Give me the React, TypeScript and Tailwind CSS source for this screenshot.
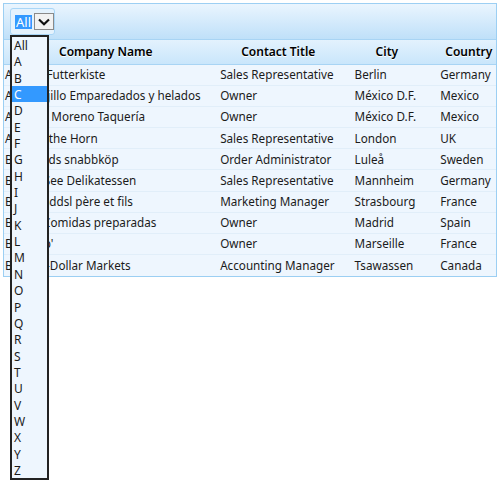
import React from "react";

const rows = [
  ["Alfreds Futterkiste", "Sales Representative", "Berlin", "Germany"],
  ["Ana Trujillo Emparedados y helados", "Owner", "México D.F.", "Mexico"],
  ["Antonio Moreno Taquería", "Owner", "México D.F.", "Mexico"],
  ["Around the Horn", "Sales Representative", "London", "UK"],
  ["Berglunds snabbköp", "Order Administrator", "Luleå", "Sweden"],
  ["Blauer See Delikatessen", "Sales Representative", "Mannheim", "Germany"],
  ["Blondesddsl père et fils", "Marketing Manager", "Strasbourg", "France"],
  ["Bólido Comidas preparadas", "Owner", "Madrid", "Spain"],
  ["Bon app'", "Owner", "Marseille", "France"],
  ["Bottom-Dollar Markets", "Accounting Manager", "Tsawassen", "Canada"],
];

const letters = ["All", ..."ABCDEFGHIJKLMNOPQRSTUVWXYZ".split("")];

export default function App() {
  return (
    <div className="relative w-[504px] h-[482px] bg-white font-['Noto_Sans',sans-serif] text-[11.7px] text-[#1b1b1b] pt-[3px] pl-[3px]">
      {/* Grid */}
      <div className="w-[494px] border border-[#9ccff3] bg-[#eef6fe]">
        {/* Toolbar */}
        <div className="h-[35px] pl-[6px] pt-[4px] bg-gradient-to-b from-[#eaf5fe] to-[#bfe0f9]">
          <div className="w-[45px] h-[27px] rounded-[3px] border border-[#a9d6f7] bg-[#e4f2fd] flex items-center pl-[4px] gap-[2px]">
            <span className="bg-[#3399ff] text-white text-[13px] leading-[14px] h-[14px] px-[1px] flex items-center">All</span>
            <span className="w-[20px] h-[17px] border border-[#8a8a8a] bg-[#f2f2f2] flex items-center justify-center">
              <svg width="12" height="8" viewBox="0 0 12 8">
                <path d="M1 1.5 L6 6.2 L11 1.5" fill="none" stroke="#111" strokeWidth="2.2" />
              </svg>
            </span>
          </div>
        </div>
        {/* Header */}
        <div className="h-[26px] pb-[1px] flex items-center border-t border-b border-[#a8d4f4] bg-gradient-to-b from-[#e3f2fd] to-[#c9e6fb] font-semibold text-[12px] text-black [text-shadow:0_1px_0_#fff]">
          <div className="w-[213px] pl-[55px]">Company Name</div>
          <div className="w-[135px] pl-[25px]">Contact Title</div>
          <div className="w-[86px] pl-[25px]">City</div>
          <div className="w-[60px] pl-[9px]">Country</div>
        </div>
        {/* Rows */}
        {rows.map((r, i) => (
          <div key={i} className={`h-[21.1px] flex items-center whitespace-nowrap ${i < rows.length - 1 ? "border-b border-[#e1eef9]" : ""}`}>
            <div className="w-[213px] pl-[1px] overflow-hidden">{r[0]}</div>
            <div className="w-[135px] pl-[4px] overflow-hidden">{r[1]}</div>
            <div className="w-[86px] pl-[4px] overflow-hidden">{r[2]}</div>
            <div className="w-[60px] pl-[4px] overflow-hidden">{r[3]}</div>
          </div>
        ))}
      </div>

      {/* Dropdown list */}
      <div className="absolute left-[10px] top-[35px] w-[39px] border-2 border-[#222] bg-[#eef6fe] text-[12px]">
        {letters.map((l) => (
          <div
            key={l}
            className={`h-[16.35px] leading-[16.35px] pl-[2px] pt-[1px] ${l === "C" ? "bg-[#3399ff] text-white" : ""}`}
          >
            {l}
          </div>
        ))}
      </div>
    </div>
  );
}
